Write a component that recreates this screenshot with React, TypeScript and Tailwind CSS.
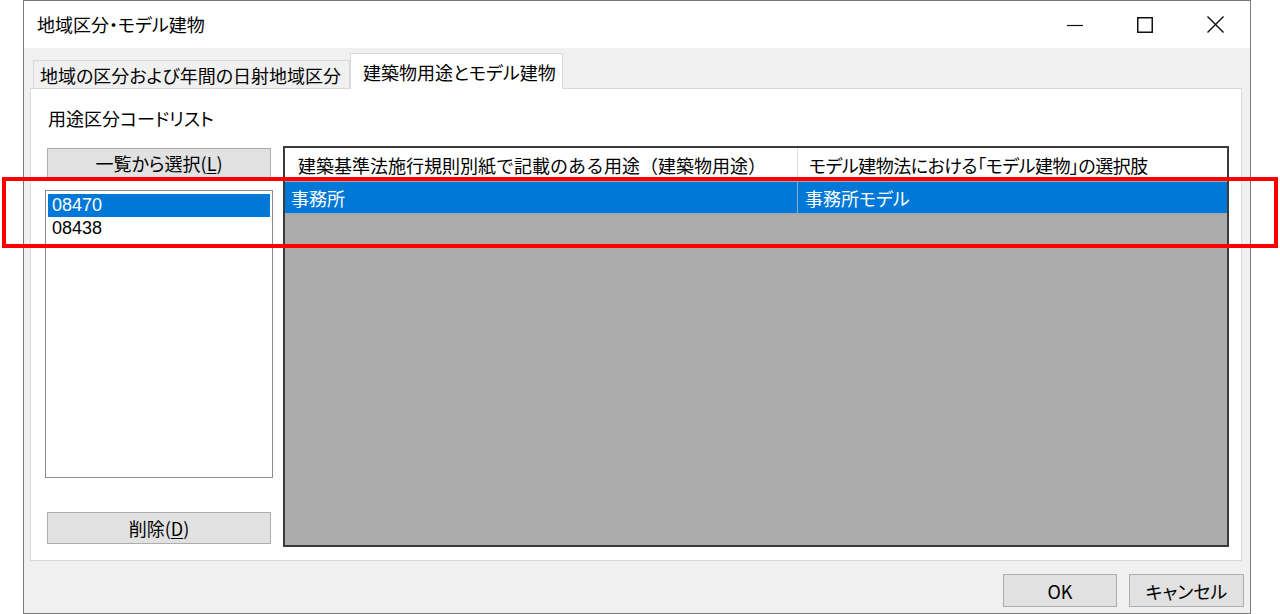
import React from "react";

const font =
  "font-['Noto_Sans_CJK_JP','Noto_Sans',sans-serif] [font-feature-settings:'palt'] text-black";

export default function App() {
  return (
    <div className={`relative w-[1280px] h-[614px] bg-white overflow-hidden ${font}`}>
      <div className="ml-[23px] w-[1228px] h-[614px] border border-[#7a7a7a] flex flex-col bg-[#f0f0f0]">
        {/* title bar */}
        <div className="h-[47px] bg-white flex items-center justify-between shrink-0">
          <div className="pl-[13px] text-[18px] leading-[24px] -mt-[2px]">地域区分・モデル建物</div>
          <div className="flex h-full">
            <div className="w-[70px] h-full flex items-center justify-center">
              <svg width="16" height="16" viewBox="0 0 16 16">
                <line x1="0" y1="8.5" x2="16" y2="8.5" stroke="#111" strokeWidth="1.2" />
              </svg>
            </div>
            <div className="w-[70px] h-full flex items-center justify-center">
              <svg width="16" height="16" viewBox="0 0 16 16">
                <rect x="0.75" y="0.75" width="14.5" height="14.5" fill="none" stroke="#111" strokeWidth="1.5" />
              </svg>
            </div>
            <div className="w-[70px] h-full flex items-center justify-center">
              <svg width="17" height="17" viewBox="0 0 17 17">
                <line x1="0.5" y1="0.5" x2="16.5" y2="16.5" stroke="#111" strokeWidth="1.4" />
                <line x1="16.5" y1="0.5" x2="0.5" y2="16.5" stroke="#111" strokeWidth="1.4" />
              </svg>
            </div>
          </div>
        </div>

        {/* tabs */}
        <div className="h-[40px] pt-[5px] pl-[9px] flex items-end shrink-0">
          <div className="w-[317px] h-[28px] border border-b-0 border-[#d9d9d9] bg-[#f0f0f0] flex items-center pl-[6px] text-[18px] leading-[24px]">
            地域の区分および年間の日射地域区分
          </div>
          <div className="relative z-10 -mb-[1px] w-[213px] h-[36px] border border-b-0 border-[#d9d9d9] bg-white flex items-center pl-[12px] text-[18px] leading-[24px]">
            建築物用途とモデル建物
          </div>
        </div>

        {/* panel */}
        <div className="ml-[6px] w-[1212px] h-[473px] border border-[#d9d9d9] bg-white pt-[17px] shrink-0">
          <div className="pl-[17px] h-[24px] leading-[24px] text-[18px]">用途区分コードリスト</div>
          <div className="mt-[16px] pl-[14px] flex">
            <div className="w-[228px] flex flex-col pt-[2px]">
              <div className="mx-[2px] h-[30px] bg-[#e1e1e1] border border-[#adadad] flex items-center justify-center text-[18px] leading-[24px]">
                一覧から選択(<span className="underline underline-offset-2">L</span>)
              </div>
              <div className="mt-[12px] h-[288px] border border-[#8c8c8c] bg-white pt-[3px] px-[2px] text-[18px] font-['Liberation_Sans','Noto_Sans_CJK_JP',sans-serif]">
                <div className="h-[23px] bg-[#0078d7] text-white pl-[4px] leading-[23px]">08470</div>
                <div className="h-[23px] pl-[4px] leading-[23px]">08438</div>
              </div>
              <div className="mt-[34px] mx-[2px] h-[32px] bg-[#e1e1e1] border border-[#adadad] flex items-center justify-center text-[18px] leading-[24px]">
                削除(<span className="underline underline-offset-2">D</span>)
              </div>
            </div>
            <div className="ml-[10px] w-[946px] h-[401px] border-2 border-[#3a3a3a] bg-[#ababab] flex flex-col">
              <div className="h-[33px] bg-white flex text-[18px] leading-[24px] shrink-0">
                <div className="w-[513px] border-r border-[#e0e0e0] flex items-center pl-[13px] [font-feature-settings:normal]">
                  建築基準法施行規則別紙で記載のある用途（建築物用途）
                </div>
                <div className="flex-1 flex items-center pl-[11px] tracking-[-0.5px]">
                  モデル建物法における「モデル建物」の選択肢
                </div>
              </div>
              <div className="h-[33px] bg-[#0078d7] text-white flex text-[18px] leading-[24px] border-y border-[#9aa7b4] shrink-0">
                <div className="w-[513px] border-r border-[#8fa9c2] flex items-center pl-[6px]">事務所</div>
                <div className="flex-1 flex items-center pl-[7px]">事務所モデル</div>
              </div>
            </div>
          </div>
        </div>

        {/* bottom buttons */}
        <div className="flex-1 flex justify-end items-start pt-[13px] pr-[6px] gap-[12px]">
          <div className="w-[114px] h-[33px] bg-[#e1e1e1] border border-[#adadad] flex items-center justify-center text-[18px] leading-[24px]">
            OK
          </div>
          <div className="w-[115px] h-[33px] bg-[#e1e1e1] border border-[#adadad] flex items-center justify-center text-[18px] leading-[24px]">
            キャンセル
          </div>
        </div>
      </div>

      {/* red highlight overlay */}
      <div className="absolute left-[2px] top-[177px] w-[1276px] h-[71px] border-[4px] border-[#ff0000] pointer-events-none" />
    </div>
  );
}
